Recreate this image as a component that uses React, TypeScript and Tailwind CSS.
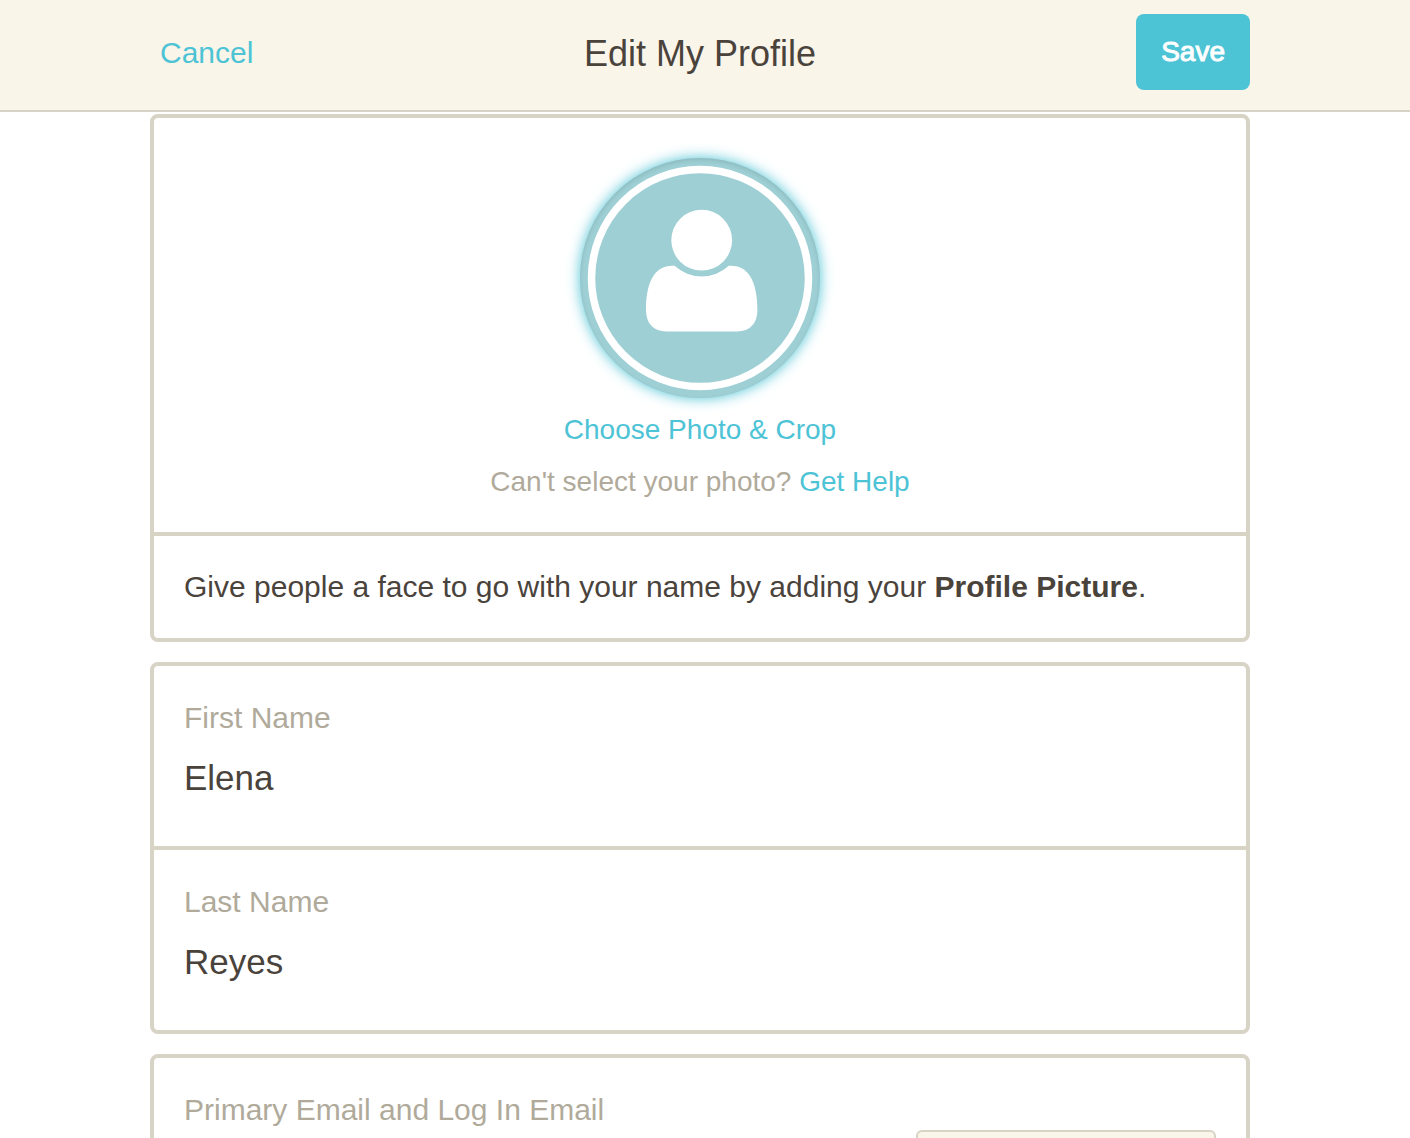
import { useState, type ReactNode } from "react";

function Card({ children }: { children: ReactNode }) {
  return (
    <section className="divide-y-4 divide-[#d7d3c5] rounded-lg border-4 border-[#d7d3c5] bg-white">
      {children}
    </section>
  );
}

function NameField({ id, label, initial }: { id: string; label: string; initial: string }) {
  const [value, setValue] = useState(initial);
  return (
    <div className="px-[30px] pt-[30px] pb-[38px]">
      <label htmlFor={id} className="block text-[30px] leading-[44px] text-[#b0aa9b]">
        {label}
      </label>
      <input
        id={id}
        type="text"
        value={value}
        onChange={(event) => setValue(event.target.value)}
        className="mt-2 block h-[60px] w-full bg-transparent text-[35px] text-[#4a433c] outline-none"
      />
    </div>
  );
}

function Avatar() {
  return (
    <div className="h-[240px] w-[240px] rounded-full bg-[#9dcfd4] shadow-[0_0_14px_#4dc3d6,inset_0_2px_4px_rgba(0,0,0,0.1)]">
      <svg viewBox="0 0 240 240" className="h-full w-full" role="img" aria-label="Profile picture">
        <circle cx="120" cy="120" r="108.5" fill="#9dcfd4" stroke="#ffffff" strokeWidth="7.5" />
        <circle cx="121.7" cy="82.2" r="30.4" fill="#ffffff" />
        <path
          d="M94.6 107.8A40 40 0 0 0 148.8 107.8C164 106.5 177.4 117 177.4 152C177.4 165.5 170 173.4 157 173.4H86.5C73.5 173.4 66 165.5 66 152C66 117 79.4 106.5 94.6 107.8Z"
          fill="#ffffff"
        />
      </svg>
    </div>
  );
}

export default function App() {
  return (
    <div className="flex h-screen flex-col bg-white font-['Liberation_Sans',Arial,sans-serif] text-[#4a433c]">
      <header className="shrink-0 border-b-2 border-[#d7d3c5] bg-[#faf5e9] pt-3.5 pr-2.5 pb-5">
        <div className="mx-auto grid max-w-[1100px] grid-cols-[1fr_auto_1fr] items-center">
          <a href="#cancel" className="justify-self-start pl-2.5 text-[30px] text-[#4dc3d6]">
            Cancel
          </a>
          <h1 className="pt-1 text-[36px] leading-[44px]">Edit My Profile</h1>
          <button
            type="button"
            className="h-[76px] justify-self-end rounded-lg bg-[#4dc3d6] px-[25px] text-[28px] text-white [-webkit-text-stroke:1px_white]"
          >
            Save
          </button>
        </div>
      </header>

      <main className="min-h-0 flex-1 overflow-y-auto pt-0.5 pr-2.5 pb-5 [scrollbar-width:none]">
        <div className="mx-auto flex max-w-[1100px] flex-col gap-5">
          <Card>
            <div className="flex flex-col items-center px-[30px] pt-10 pb-6">
              <Avatar />
              <a href="#photo" className="mt-1.5 text-[28px] leading-[52px] text-[#4dc3d6]">
                Choose Photo &amp; Crop
              </a>
              <p className="text-[28px] leading-[52px] text-[#b0aa9b]">
                Can't select your photo?{" "}
                <a href="#help" className="text-[#4dc3d6]">
                  Get Help
                </a>
              </p>
            </div>
            <p className="px-[30px] py-[29px] text-[30px] leading-[44px]">
              Give people a face to go with your name by adding your <strong>Profile Picture</strong>.
            </p>
          </Card>

          <Card>
            <NameField id="first-name" label="First Name" initial="Elena" />
            <NameField id="last-name" label="Last Name" initial="Reyes" />
          </Card>

          <Card>
            <div className="flex items-start justify-between px-[30px] pt-[30px] pb-[38px]">
              <label htmlFor="email-privacy" className="text-[30px] leading-[44px] text-[#b0aa9b]">
                Primary Email and Log In Email
              </label>
              <button
                id="email-privacy"
                type="button"
                aria-label="Email privacy"
                className="mt-[42px] h-[72px] w-[300px] rounded-md border-2 border-[#d7d3c5] bg-[#faf5e9]"
              />
            </div>
          </Card>
        </div>
      </main>
    </div>
  );
}
